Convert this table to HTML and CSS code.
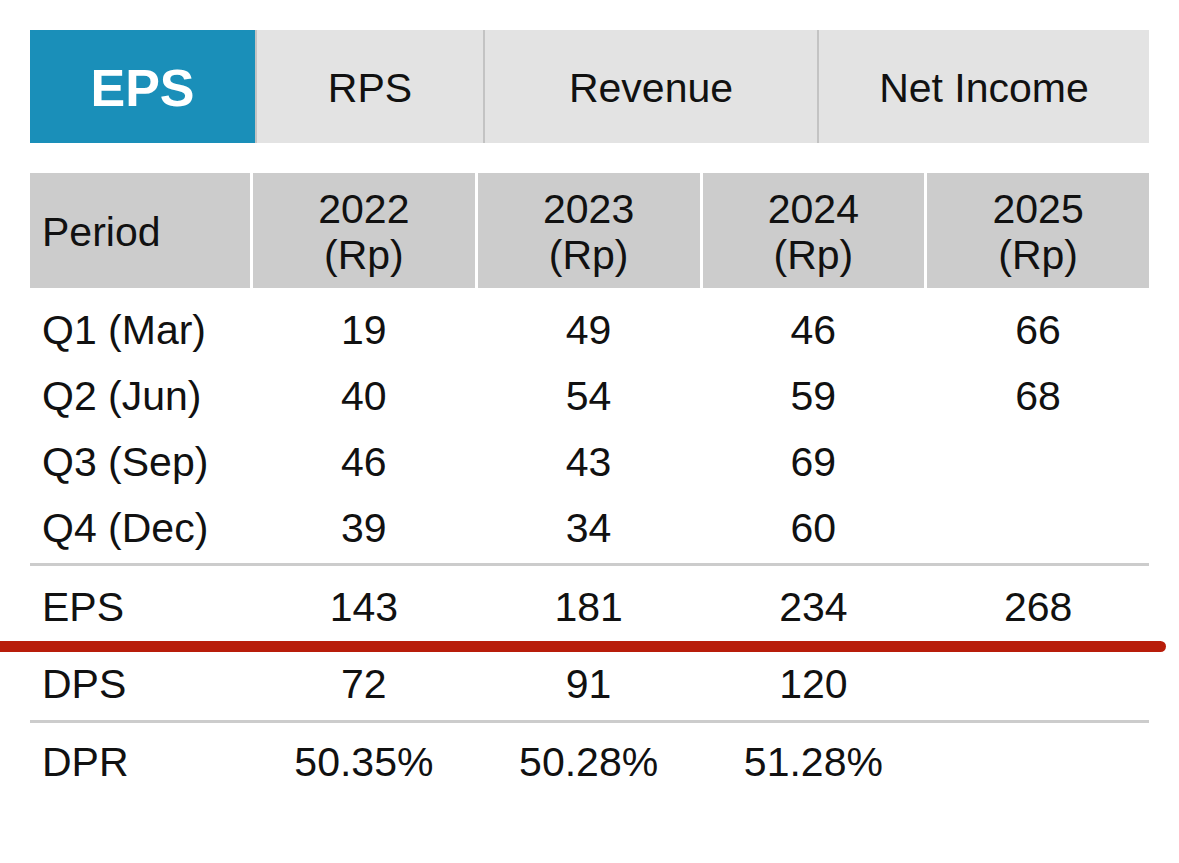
FILE: index.html
```html
<!DOCTYPE html>
<html>
<head>
<meta charset="utf-8">
<link rel="stylesheet" href="styles.css">
</head>
<body>
<div class="page">
  <div class="tabs">
    <div class="tab active">EPS</div>
    <div class="tab">RPS</div>
    <div class="tab">Revenue</div>
    <div class="tab">Net Income</div>
  </div>

  <div class="table">
    <div class="thead">
      <div class="th th-left">Period</div>
      <div class="th">2022<br>(Rp)</div>
      <div class="th">2023<br>(Rp)</div>
      <div class="th">2024<br>(Rp)</div>
      <div class="th">2025<br>(Rp)</div>
    </div>

    <div class="quarters">
      <div class="row q"><div class="label">Q1 (Mar)</div><div>19</div><div>49</div><div>46</div><div>66</div></div>
      <div class="row q"><div class="label">Q2 (Jun)</div><div>40</div><div>54</div><div>59</div><div>68</div></div>
      <div class="row q"><div class="label">Q3 (Sep)</div><div>46</div><div>43</div><div>69</div><div></div></div>
      <div class="row q"><div class="label">Q4 (Dec)</div><div>39</div><div>34</div><div>60</div><div></div></div>
    </div>

    <div class="row eps"><div class="label">EPS</div><div>143</div><div>181</div><div>234</div><div>268</div></div>
    <div class="row dps"><div class="label">DPS</div><div>72</div><div>91</div><div>120</div><div></div></div>
    <div class="row dpr"><div class="label">DPR</div><div>50.35%</div><div>50.28%</div><div>51.28%</div><div></div></div>
  </div>

  <div class="marker"></div>
</div>
</body>
</html>
```

FILE: styles.css
```css
html, body {
  margin: 0;
  padding: 0;
  background: #ffffff;
}

body {
  font-family: "Liberation Sans", Arial, sans-serif;
  color: #111111;
}

.page {
  position: relative;
  width: 1179px;
  height: 863px;
  padding: 30px 30px 0 30px;
  box-sizing: border-box;
}

.tabs {
  display: grid;
  grid-template-columns: 225px 228px 334px 1fr;
  height: 113px;
  background: #e3e3e3;
}

.tab {
  display: flex;
  align-items: center;
  justify-content: center;
  padding-top: 3px;
  font-size: 41px;
  color: #111111;
  border-left: 2px solid #c3c3c3;
}

.tab.active {
  background: #1a8fb9;
  color: #ffffff;
  font-weight: bold;
  font-size: 52px;
  border-left: none;
}

.table {
  margin-top: 30px;
}

.thead {
  display: grid;
  grid-template-columns: 220px repeat(4, 1fr);
  column-gap: 3px;
  height: 115px;
}

.th {
  background: #cccccc;
  display: flex;
  align-items: center;
  justify-content: center;
  text-align: center;
  font-size: 41px;
  line-height: 46px;
  padding-top: 2px;
  box-sizing: border-box;
}

.th-left {
  justify-content: flex-start;
  padding-left: 12px;
}

.quarters {
  padding-top: 9px;
  padding-bottom: 2px;
  border-bottom: 3px solid #cccccc;
}

.row {
  display: grid;
  grid-template-columns: 220px repeat(4, 1fr);
  column-gap: 3px;
  align-items: center;
  font-size: 41px;
}

.row > div {
  text-align: center;
}

.row > .label {
  text-align: left;
  padding-left: 12px;
}

.row.q {
  height: 66px;
}

.row.eps {
  height: 82px;
}

.row.dps {
  height: 72px;
  border-bottom: 3px solid #cccccc;
}

.row.dpr {
  height: 78px;
}

.marker {
  position: absolute;
  left: 0;
  top: 641px;
  width: 1166px;
  height: 11px;
  background: #b81d0a;
  border-radius: 0 6px 6px 0;
}
```
